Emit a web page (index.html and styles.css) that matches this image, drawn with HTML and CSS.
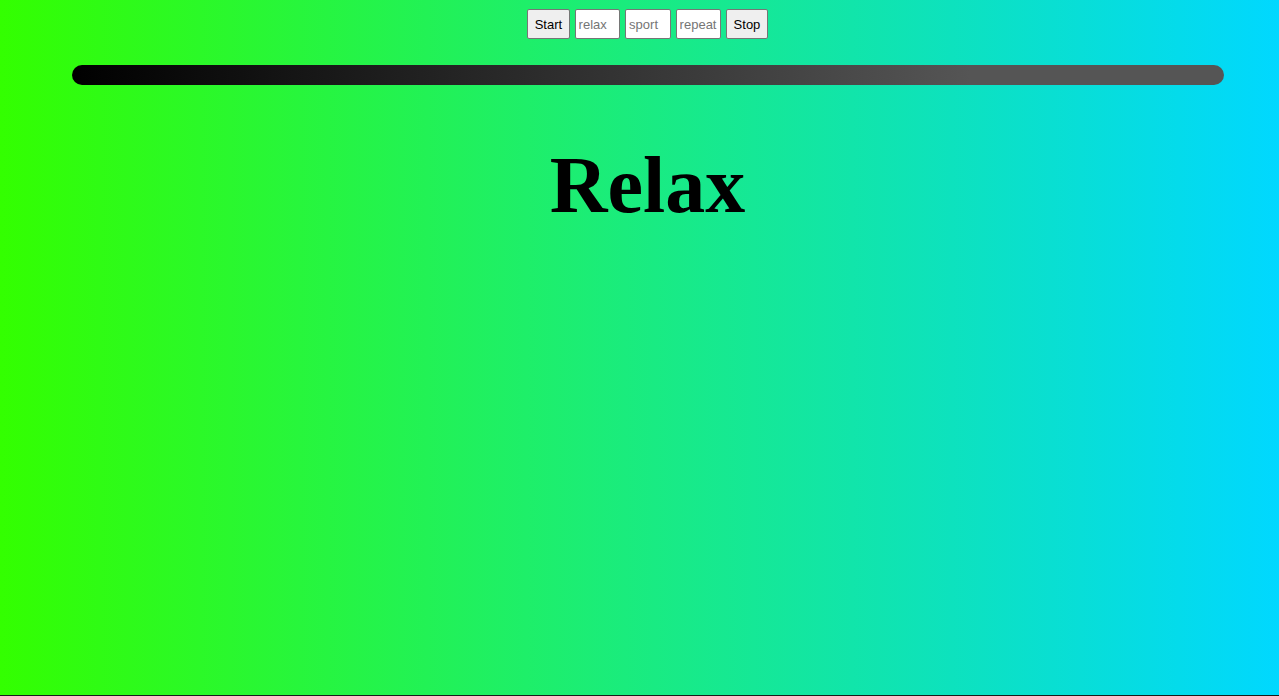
FILE: index.html
```html
<!DOCTYPE html>
<html>
<head>
<meta charset="utf-8">
<link rel="stylesheet" href="styles.css">
</head>
<body>
<div class="page">
  <div class="controls">
    <button class="btn">Start</button>
    <input class="field" type="text" placeholder="relax">
    <input class="field" type="text" placeholder="sport">
    <input class="field" type="text" placeholder="repeat">
    <button class="btn">Stop</button>
  </div>
  <div class="bar"></div>
  <h1 class="title">Relax</h1>
</div>
</body>
</html>
```
FILE: styles.css
```css
html, body {
  margin: 0;
  padding: 0;
  height: 100%;
}
body {
  background: linear-gradient(to right, #33ff00, #00d8ff);
  font-family: "Liberation Sans", Arial, sans-serif;
  overflow: hidden;
}
.page {
  height: 695px;
  border-bottom: 1px solid #1a1a1a;
  display: flex;
  flex-direction: column;
}
.controls {
  display: flex;
  justify-content: center;
  gap: 5px;
  padding-top: 9px;
  padding-left: 16px;
}
.btn {
  font-family: "Liberation Sans", Arial, sans-serif;
  font-size: 13px;
  height: 30px;
  padding: 1px 6.5px 0;
  background: #efefef;
  border: 1px solid #767676;
  border-radius: 2px;
  color: #000;
}
.field {
  font-family: "Liberation Sans", Arial, sans-serif;
  font-size: 13px;
  width: 45.5px;
  height: 30px;
  box-sizing: border-box;
  padding: 1px 3px 0;
  border: 1px solid #767676;
  border-radius: 2px;
  background: #fff;
}
.field::placeholder {
  color: #757575;
}
.bar {
  margin: 26px 55px 0 72px;
  height: 20px;
  border-radius: 10px;
  background: linear-gradient(to right, #000000, #555555 78%, #555555);
}
.title {
  margin: 42px 0 0;
  padding-left: 16px;
  text-align: center;
  font-family: "Liberation Serif", "Times New Roman", serif;
  font-weight: bold;
  font-size: 80px;
  line-height: 116px;
  color: #000;
}
```
